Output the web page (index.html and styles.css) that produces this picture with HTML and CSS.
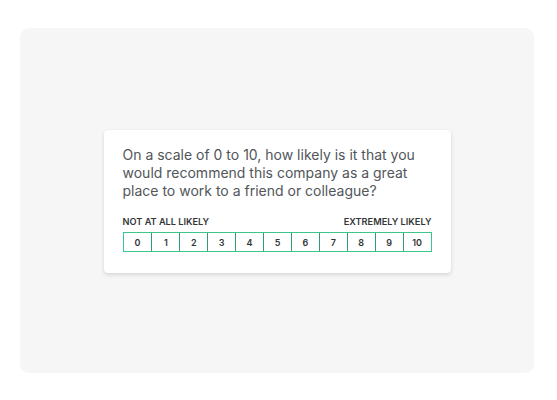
FILE: index.html
```html
<!DOCTYPE html>
<html lang="en">
<head>
<meta charset="utf-8">
<title>NPS question</title>
<link rel="stylesheet" href="styles.css">
</head>
<body>
<div class="panel">
  <div class="card">
    <p class="question"><span class="line">On a scale of 0 to 10, how likely is it that you</span> <span class="line">would recommend this company as a great</span> <span class="line">place to work to a friend or colleague?</span></p>
    <div class="labels">
      <span>NOT AT ALL LIKELY</span>
      <span>EXTREMELY LIKELY</span>
    </div>
    <div class="scale">
      <div class="cell">0</div>
      <div class="cell">1</div>
      <div class="cell">2</div>
      <div class="cell">3</div>
      <div class="cell">4</div>
      <div class="cell">5</div>
      <div class="cell">6</div>
      <div class="cell">7</div>
      <div class="cell">8</div>
      <div class="cell">9</div>
      <div class="cell">10</div>
    </div>
  </div>
</div>
</body>
</html>
```
FILE: styles.css
```css
html, body {
  margin: 0;
  padding: 0;
  background: #ffffff;
}
body {
  font-family: Inter, "Open Sans", sans-serif;
  width: 557px;
  height: 400px;
  overflow: hidden;
  padding-top: 28px;
  box-sizing: border-box;
}
.panel {
  margin-left: 20px;
  width: 514px;
  height: 345px;
  background: #f6f6f6;
  border-radius: 9px;
  display: flex;
  align-items: center;
  justify-content: center;
}
.card {
  width: 347px;
  box-sizing: border-box;
  background: #ffffff;
  border-radius: 4px;
  box-shadow: 0 2px 4px rgba(0, 0, 0, 0.13), 0 0 1px rgba(0, 0, 0, 0.06);
  padding: 16px 19px 21px 19px;
  margin-top: 2px;
}
.question {
  margin: 0;
  font-size: 14px;
  line-height: 18px;
  color: #51565a;
  font-weight: 400;
}
.line {
  display: block;
  white-space: nowrap;
}
.labels {
  display: flex;
  justify-content: space-between;
  margin-top: 17px;
  font-size: 9.2px;
  line-height: 10px;
  font-weight: 600;
  color: #333638;
}
.scale {
  margin-top: 5px;
  display: grid;
  grid-template-columns: repeat(11, 1fr);
  height: 20px;
  border: 1.5px solid #3cc68e;
  box-sizing: border-box;
}
.cell {
  display: flex;
  align-items: center;
  justify-content: center;
  font-size: 9px;
  font-weight: 600;
  color: #333638;
}
.cell + .cell {
  border-left: 1px solid #2f9c6e;
}
```
